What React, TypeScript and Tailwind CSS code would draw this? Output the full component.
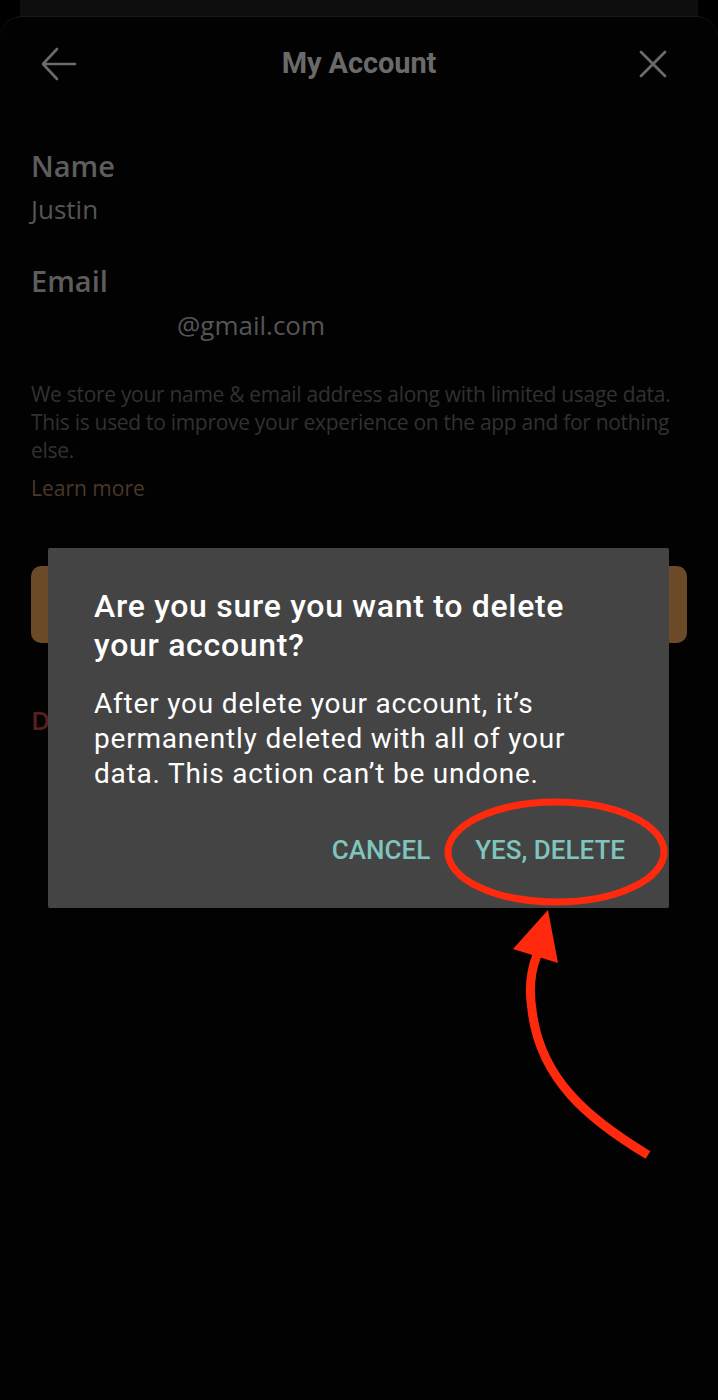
import React from "react";

export default function App() {
  return (
    <div className="relative w-[718px] h-[1400px] bg-black overflow-hidden flex flex-col">
      {/* back sheet peeking at top */}
      <div className="h-[16px] px-[20px] shrink-0">
        <div className="h-full bg-[#0e0e0e]"></div>
      </div>
      {/* main sheet */}
      <div className="flex-1 bg-[#020202] rounded-t-[22px] border-t border-[#1a1a1a] flex flex-col">
        {/* header */}
        <div className="h-[94px] flex items-center justify-between pl-[40px] pr-[50px] font-['Roboto',sans-serif]">
          <svg width="38" height="34" viewBox="0 0 38 34" fill="none" stroke="#6b6b6b" strokeWidth="2.6" strokeLinecap="round" strokeLinejoin="round">
            <path d="M35 17H3M17 2L3 17l14 15" />
          </svg>
          <div className="text-[29px] font-bold text-[#6a6a6a] tracking-[-0.1px] ml-[2px]">My Account</div>
          <svg width="30" height="30" viewBox="0 0 30 30" fill="none" stroke="#6b6b6b" strokeWidth="2.8" strokeLinecap="round">
            <path d="M3 3l24 24M27 3L3 27" />
          </svg>
        </div>

        <div className="px-[31px] font-['Open_Sans',sans-serif]">
          <div className="mt-[37px] text-[29px] font-semibold leading-[36px] text-[#5d5d5d]">Name</div>
          <div className="mt-[8px] text-[26px] leading-[34px] text-[#555555]">Justin</div>
          <div className="mt-[37px] text-[29px] font-semibold leading-[36px] text-[#5d5d5d]">Email</div>
          <div className="mt-[9px] pl-[146px] text-[26px] leading-[34px] text-[#555555]">@gmail.com</div>
          <p className="mt-[38px] text-[21px] leading-[28px] text-[#313131] tracking-[-0.3px]">
            We store your name &amp; email address along with limited usage data. This is used to improve your experience on the app and for nothing else.
          </p>
          <div className="mt-[10px] text-[21px] leading-[28px] text-[#4a3829]">Learn more</div>

          <div className="mt-[64px] h-[77px] rounded-[10px] bg-[#6b4a27]"></div>
          <div className="mt-[58px] text-[26px] font-semibold text-[#5a1f1f]">Delete account</div>
        </div>
      </div>

      {/* dialog */}
      <div className="absolute left-[48px] top-[548px] w-[621px] h-[360px] bg-[#444444] rounded-[2px] font-['Roboto',sans-serif] flex flex-col px-[46px] pt-[39px]">
        <div className="max-w-[520px] text-[32px] font-medium leading-[39px] text-white tracking-[0.7px]">
          Are you sure you want to delete your account?
        </div>
        <div className="mt-[21px] max-w-[490px] text-[28px] leading-[35px] text-white tracking-[0.8px]">
          After you delete your account, it’s permanently deleted with all of your data. This action can’t be undone.
        </div>
        <div className="mt-auto mb-[38px] flex justify-end items-center gap-[45px] mr-[-2px] text-[26px] font-medium text-[#7fc5bd]">
          <span>CANCEL</span>
          <span>YES, DELETE</span>
        </div>
      </div>

      {/* annotation */}
      <svg className="absolute left-0 top-0" width="718" height="1400" viewBox="0 0 718 1400" fill="none">
        <ellipse cx="556" cy="852" rx="108" ry="50" stroke="#ff2a0d" strokeWidth="7" />
        <path d="M648 1155 C 590 1120, 540 1080, 532 1010 C 528 985, 533 965, 537 955" stroke="#ff2a0d" strokeWidth="9" strokeLinecap="butt" />
        <polygon points="548,910 513,949 558,963" fill="#ff2a0d" />
      </svg>
    </div>
  );
}
